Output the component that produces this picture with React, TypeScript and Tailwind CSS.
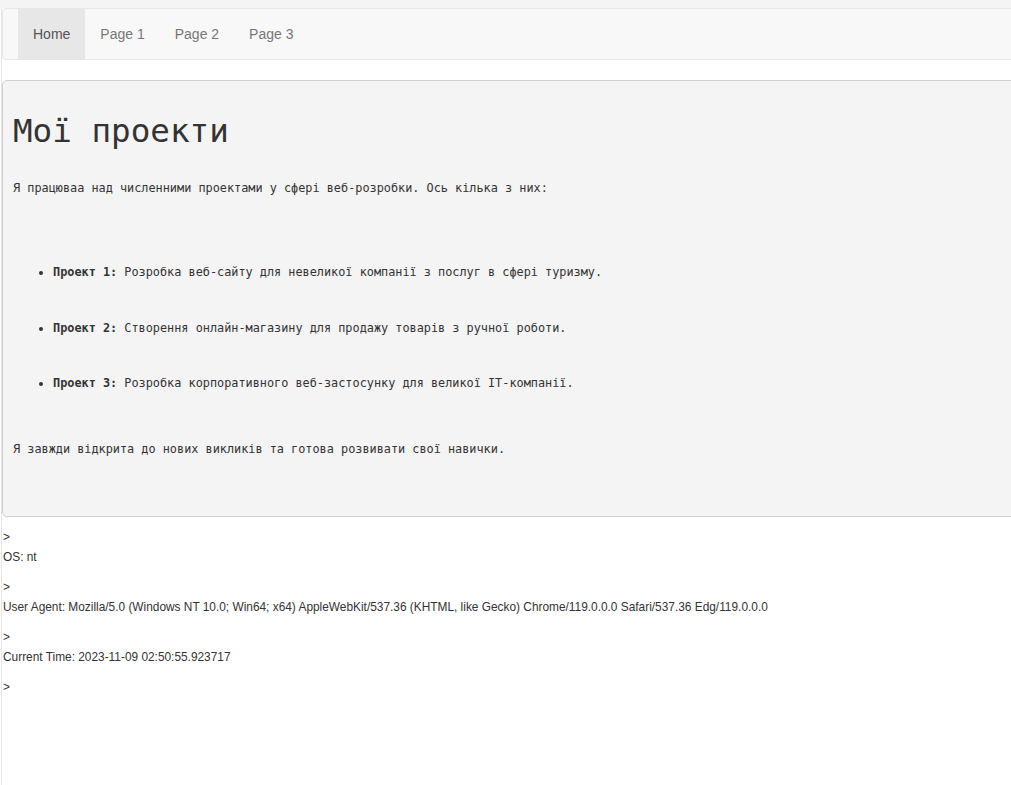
const MONO = "font-['DejaVu_Sans_Mono',monospace]";

const projects = [
  { name: "Проект 1:", text: "Розробка веб-сайту для невеликої компанії з послуг в сфері туризму." },
  { name: "Проект 2:", text: "Створення онлайн-магазину для продажу товарів з ручної роботи." },
  { name: "Проект 3:", text: "Розробка корпоративного веб-застосунку для великої IT-компанії." },
];

const info = [
  "OS: nt",
  "User Agent: Mozilla/5.0 (Windows NT 10.0; Win64; x64) AppleWebKit/537.36 (KHTML, like Gecko) Chrome/119.0.0.0 Safari/537.36 Edg/119.0.0.0",
  "Current Time: 2023-11-09 02:50:55.923717",
];

export default function App() {
  return (
    <div className="min-h-screen overflow-hidden bg-white font-['Liberation_Sans',Arial,sans-serif] text-[#333]">
      <div className="h-2 bg-[#f4f4f4]" />
      <div className="ml-px min-h-[777px] border-l border-[#e6e6e6]">
        {/* navbar */}
        <nav className="w-[1030px] rounded-tl-[4px] rounded-bl-[4px] border border-[#e7e7e7] bg-[#f8f8f8] px-[15px]">
          <ul className="flex text-[14px] leading-[20px]">
            <li className="bg-[#e7e7e7] px-[15px] py-[15px] text-[#555]">Home</li>
            <li className="px-[15px] py-[15px] text-[#777]">Page 1</li>
            <li className="px-[15px] py-[15px] text-[#777]">Page 2</li>
            <li className="px-[15px] py-[15px] text-[#777]">Page 3</li>
          </ul>
        </nav>

        {/* jumbotron */}
        <section
          className={`mt-[20px] w-[1030px] rounded-[5px] border border-[#cfcfcf] bg-[#f4f4f4] px-[10px] pt-[30px] pb-[57px] ${MONO} text-[#333]`}
        >
          <h1 className="h-[40px] text-[32.6px] leading-[40px]">Мої проекти</h1>
          <p className="mt-[27px] text-[11.85px] leading-[20px]">
            Я працюваа над численними проектами у сфері веб-розробки. Ось кілька з них:
          </p>
          <ul className="mt-[64px] list-disc pl-[40px] text-[11.85px] leading-[20px]">
            {projects.map((p, i) => (
              <li key={p.name} className={i === 0 ? "" : i === 1 ? "mt-[36px]" : "mt-[35px]"}>
                <strong className="font-bold">{p.name}</strong> {p.text}
              </li>
            ))}
          </ul>
          <p className="mt-[46px] text-[11.85px] leading-[20px]">
            Я завжди відкрита до нових викликів та готова розвивати свої навички.
          </p>
        </section>

        {/* server info */}
        <div className="mt-[10px] pl-px text-[11.88px] leading-[20px] text-[#333]">
          {info.map((line) => (
            <div key={line} className="mb-[10px]">
              <div>&gt;</div>
              <div className="whitespace-nowrap">{line}</div>
            </div>
          ))}
          <div>&gt;</div>
        </div>
      </div>
    </div>
  );
}
